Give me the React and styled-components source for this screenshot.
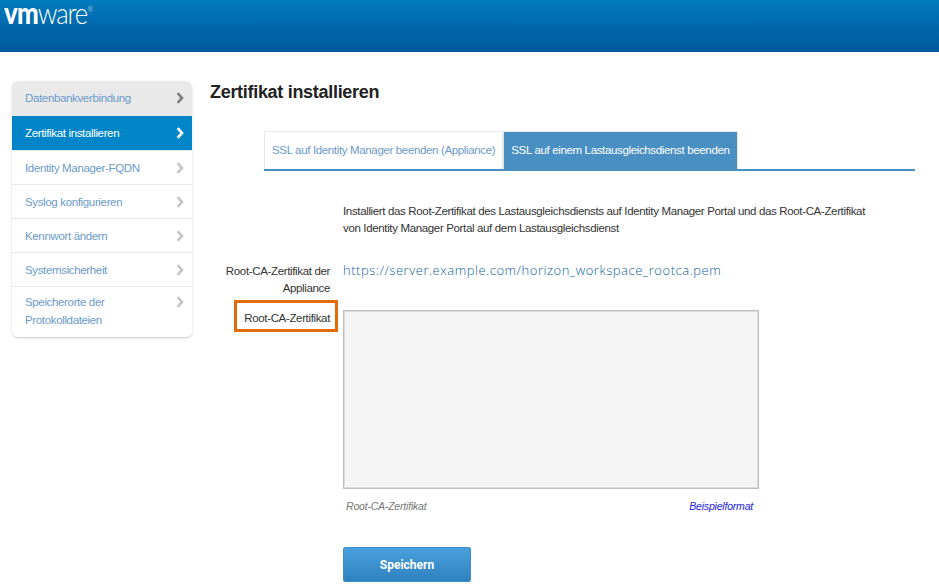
import React from 'react';
import styled, { createGlobalStyle } from 'styled-components';

const navItems = [
  { label: 'Datenbankverbindung', state: 'first', height: 35 },
  { label: 'Zertifikat installieren', state: 'active', height: 35 },
  { label: 'Identity Manager-FQDN', height: 34 },
  { label: 'Syslog konfigurieren', height: 34 },
  { label: 'Kennwort ändern', height: 34 },
  { label: 'Systemsicherheit', height: 34 },
  { label: 'Speicherorte der Protokolldateien', height: 50, tall: true },
];

const Chevron = () => (
  <svg viewBox="0 0 8 12" aria-hidden="true">
    <path d="M1.6 1.2 L6 6 L1.6 10.8" fill="none" stroke="currentColor" strokeWidth="2.6" />
  </svg>
);

export default function App() {
  return (
    <>
      <GlobalStyle />
      <Header>
        <Logo>
          <b>vm</b>ware<sup>®</sup>
        </Logo>
      </Header>
      <Page>
        <Sidebar>
          {navItems.map((item) => (
            <NavRow key={item.label} $state={item.state} $height={item.height} $tall={item.tall}>
              <NavLabel $tall={item.tall}>{item.label}</NavLabel>
              <Chevron />
            </NavRow>
          ))}
        </Sidebar>
        <Main>
          <Title>Zertifikat installieren</Title>
          <Tabs>
            <Tab>SSL auf Identity Manager beenden (Appliance)</Tab>
            <Tab $active>SSL auf einem Lastausgleichsdienst beenden</Tab>
          </Tabs>
          <Form>
            <Intro>
              Installiert das Root-Zertifikat des Lastausgleichsdiensts auf Identity Manager Portal und das Root-CA-Zertifikat
              <br />
              von Identity Manager Portal auf dem Lastausgleichsdienst
            </Intro>
            <UrlRow>
              <FieldLabel>Root-CA-Zertifikat der Appliance</FieldLabel>
              <UrlLink>https://server.example.com/horizon_workspace_rootca.pem</UrlLink>
            </UrlRow>
            <CertRow>
              <MarkedLabel>Root-CA-Zertifikat</MarkedLabel>
              <CertColumn>
                <CertArea />
                <HintRow>
                  <span>Root-CA-Zertifikat</span>
                  <SampleLink>Beispielformat</SampleLink>
                </HintRow>
                <SaveButton>Speichern</SaveButton>
              </CertColumn>
            </CertRow>
          </Form>
        </Main>
      </Page>
    </>
  );
}

const GlobalStyle = createGlobalStyle`
  html, body {
    margin: 0;
    padding: 0;
    background: #fff;
    font-family: "Liberation Sans", Arial, sans-serif;
    overflow: hidden;
  }
`;

const Header = styled.header`
  height: 52px;
  background: linear-gradient(to bottom, #007bbd 0%, #0069ab 50%, #00599b 100%);
`;

const Logo = styled.div`
  padding: 0 0 0 4px;
  width: max-content;
  color: #fff;
  font-family: "Lato", "Liberation Sans", sans-serif;
  font-size: 30px;
  line-height: 24px;
  font-weight: 300;
  letter-spacing: -1.4px;
  transform: scaleX(0.86);
  transform-origin: 4px 0;

  b {
    font-weight: 900;
    letter-spacing: -1px;
  }

  sup {
    font-size: 7px;
    line-height: 0;
    vertical-align: 12px;
    letter-spacing: 0;
    margin-left: 1px;
  }
`;

const Page = styled.div`
  display: flex;
  align-items: flex-start;
  padding: 29px 0 0 12px;
`;

const Sidebar = styled.nav`
  width: 180px;
  flex: none;
  background: #fff;
  border-radius: 6px;
  box-shadow: 0 1px 2px rgba(0, 0, 0, 0.22);
  overflow: hidden;
`;

const NavRow = styled.div`
  height: ${(p) => p.$height}px;
  box-sizing: border-box;
  display: flex;
  align-items: ${(p) => (p.$tall ? 'flex-start' : 'center')};
  justify-content: space-between;
  padding: ${(p) => (p.$tall ? '6px' : '0')} 8px 0 13px;
  border-bottom: 1px solid #e8e8e8;
  background: ${(p) => (p.$state === 'active' ? '#0085c8' : p.$state === 'first' ? '#e9e9e9' : '#fff')};
  color: ${(p) => (p.$state === 'active' ? '#fff' : '#6b9ac9')};
  font-size: 11.5px;
  letter-spacing: -0.35px;

  &:last-child {
    border-bottom: 0;
  }

  svg {
    width: 8px;
    height: 12px;
    flex: none;
    color: ${(p) => (p.$state === 'active' ? '#fff' : p.$state === 'first' ? '#7f7f7f' : '#c6c6c6')};
    margin-top: ${(p) => (p.$tall ? '3px' : '0')};
  }
`;

const NavLabel = styled.span`
  line-height: 18px;
  max-width: ${(p) => (p.$tall ? '110px' : 'none')};
`;

const Main = styled.main`
  flex: 1;
  padding-left: 18px;
`;

const Title = styled.h1`
  margin: 0;
  font-size: 18px;
  line-height: 22px;
  font-weight: 700;
  letter-spacing: -0.3px;
  color: #222;
`;

const Tabs = styled.div`
  display: flex;
  margin: 28px 24px 0 54px;
  border-bottom: 2px solid #4a8fc2;
`;

const Tab = styled.div`
  height: 38px;
  box-sizing: border-box;
  padding: 0 ${(p) => (p.$active ? '7px' : '7px')} 1px 7px;
  display: flex;
  align-items: center;
  font-size: 11.5px;
  letter-spacing: -0.35px;
  white-space: nowrap;
  color: ${(p) => (p.$active ? '#fff' : '#6b9ac9')};
  background: ${(p) => (p.$active ? '#4a8fc2' : '#fff')};
  border: 1px solid #e6e6e6;
  border-bottom: 0;
`;

const Form = styled.div`
  padding-top: 32px;
`;

const Intro = styled.p`
  margin: 0 0 0 133px;
  white-space: nowrap;
  font-size: 11.5px;
  letter-spacing: -0.35px;
  line-height: 17px;
  color: #333;
`;

const UrlRow = styled.div`
  display: flex;
  align-items: flex-start;
  margin-top: 25px;
`;

const FieldLabel = styled.div`
  width: 120px;
  flex: none;
  padding-top: 1px;
  text-align: right;
  font-size: 11.5px;
  letter-spacing: -0.35px;
  line-height: 17px;
  color: #333;
`;

const UrlLink = styled.a`
  margin-left: 13px;
  font-family: "Open Sans", sans-serif;
  font-size: 13px;
  font-weight: 300;
  line-height: 17px;
  letter-spacing: 0.53px;
  color: #0f5f9f;
`;

const CertRow = styled.div`
  display: flex;
  align-items: flex-start;
  margin-top: 3px;
`;

const MarkedLabel = styled.div`
  width: 104px;
  height: 32px;
  flex: none;
  box-sizing: border-box;
  margin: 0 5px 0 24px;
  padding: 3px 5px 0 0;
  display: flex;
  align-items: center;
  justify-content: flex-end;
  border: 3px solid #e36c0a;
  font-size: 11.5px;
  letter-spacing: -0.35px;
  white-space: nowrap;
  color: #333;
`;

const CertColumn = styled.div`
  width: 416px;
  padding-top: 10px;
`;

const CertArea = styled.div`
  height: 179px;
  box-sizing: border-box;
  background: #f5f5f5;
  border: 1px solid #bdbdbd;
  box-shadow: inset 0 0 0 1px #dcdcdc;
`;

const HintRow = styled.div`
  display: flex;
  justify-content: space-between;
  padding: 10px 6px 0 3px;
  font-size: 10.5px;
  letter-spacing: -0.2px;
  line-height: 14px;
  font-style: italic;
  color: #777;
`;

const SampleLink = styled.a`
  color: #2222dd;
`;

const SaveButton = styled.button`
  display: block;
  width: 128px;
  height: 35px;
  margin-top: 34px;
  padding: 0;
  border: 1px solid #3d8fcb;
  border-radius: 2px;
  background: linear-gradient(to bottom, #4aa0dc, #2e82bf);
  color: #fff;
  font-family: "Roboto", sans-serif;
  font-size: 12px;
  font-weight: 700;
`;
